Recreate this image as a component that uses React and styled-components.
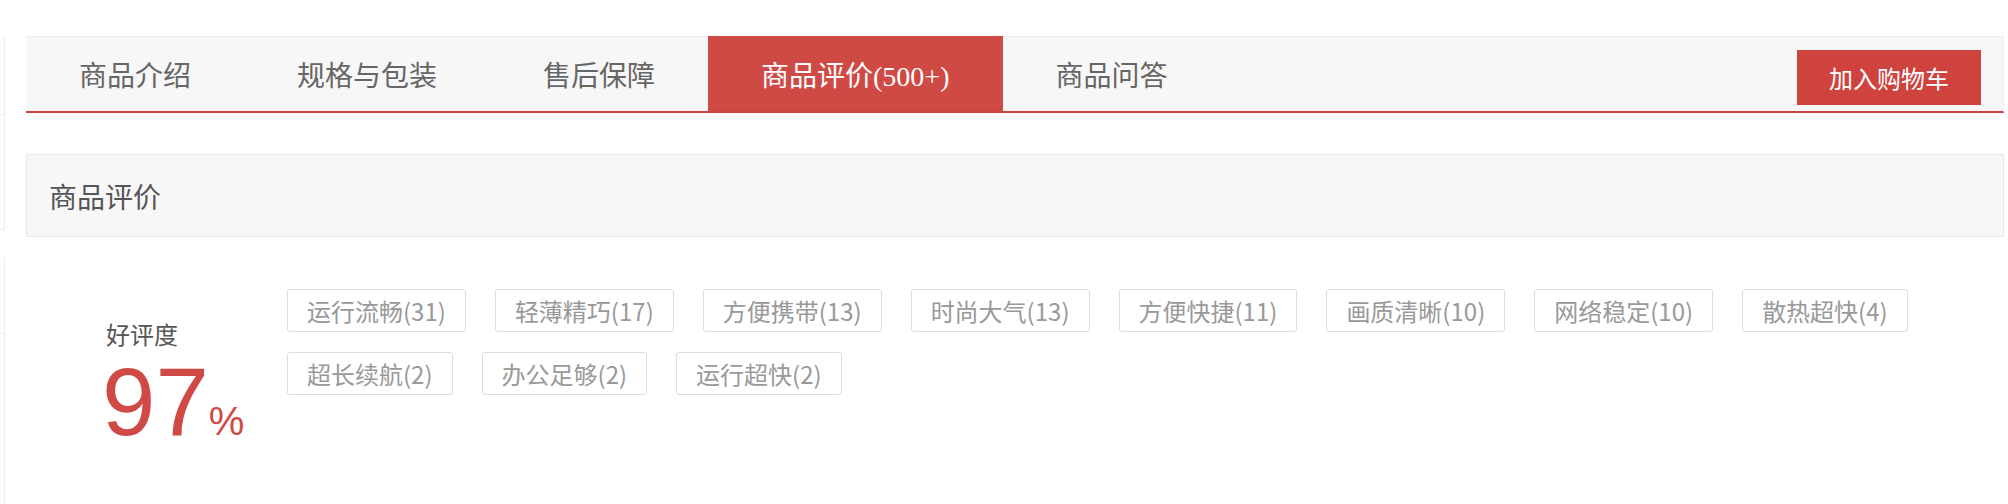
import React from 'react';
import styled, { createGlobalStyle } from 'styled-components';

const GlobalStyle = createGlobalStyle`
  html, body {
    margin: 0;
    padding: 0;
    background: #fff;
  }
  * {
    box-sizing: border-box;
  }
`;

const RED = '#d04a45';
const SERIF = '"Liberation Serif", "Noto Sans CJK SC", serif';
const SANS = '"Noto Sans CJK SC", "Noto Sans", sans-serif';

const Page = styled.div`
  display: flex;
  width: 2008px;
  height: 504px;
  overflow: hidden;
`;

const Sidebar = styled.div`
  width: 5px;
  flex-shrink: 0;
  display: flex;
  flex-direction: column;
`;

const SideCell = styled.div`
  height: ${({ $h }) => $h};
  margin-top: ${({ $top }) => $top || '0'};
  border-right: 1px solid #ececec;
  border-bottom: ${({ $last }) => ($last ? 'none' : '1px solid #ececec')};
  flex-shrink: 0;
`;

const Main = styled.div`
  flex: 1;
  margin-left: 21px;
  margin-right: 4px;
  padding-top: 36px;
`;

const TabBar = styled.div`
  display: flex;
  align-items: stretch;
  height: 77px;
  background: #f7f7f7;
  border-top: 1px solid #eeeeee;
  border-right: 1px solid #eeeeee;
  border-bottom: 2px solid #c9433f;
`;

const Tab = styled.div`
  display: flex;
  align-items: center;
  padding: 0 53px;
  margin-top: -1px;
  font-family: ${SERIF};
  font-size: 28px;
  color: ${({ $active }) => ($active ? '#fff' : '#666')};
  background: ${({ $active }) => ($active ? RED : 'transparent')};
  cursor: pointer;
`;

const CartButton = styled.button`
  align-self: flex-start;
  margin-left: auto;
  margin-right: 22px;
  margin-top: 13px;
  width: 184px;
  height: 55px;
  border: none;
  background: #cf433f;
  color: #fff;
  font-family: ${SANS};
  font-size: 24px;
  cursor: pointer;
`;

const SectionHeader = styled.div`
  margin-top: 41px;
  height: 83px;
  display: flex;
  align-items: center;
  padding-left: 22px;
  background: #f7f7f7;
  border: 1px solid #e8e8e8;
  font-family: ${SERIF};
  font-size: 28px;
  color: #555;
`;

const Review = styled.div`
  display: flex;
  padding-top: 52px;
`;

const Rate = styled.div`
  width: 261px;
  flex-shrink: 0;
  padding-left: 80px;
  padding-top: 29px;
`;

const RateLabel = styled.div`
  font-family: ${SANS};
  font-size: 24px;
  line-height: 31px;
  margin-bottom: 5px;
  color: #555;
`;

const RateValue = styled.div`
  margin-left: -4px;
  font-family: "Liberation Sans", Arial, sans-serif;
  font-size: 96px;
  line-height: 1;
  color: ${RED};
  white-space: nowrap;
`;

const Percent = styled.span`
  font-size: 40px;
`;

const Tags = styled.div`
  flex: 1;
  display: flex;
  flex-wrap: wrap;
  align-content: flex-start;
  gap: 20px 29px;
`;

const TagItem = styled.span`
  height: 43px;
  padding: 0 19px;
  border: 1px solid #dddddd;
  border-radius: 3px;
  font-family: ${SANS};
  font-size: 24px;
  line-height: 41px;
  color: #999;
  white-space: nowrap;
  cursor: pointer;
`;

const tabs = ['商品介绍', '规格与包装', '售后保障', '商品评价(500+)', '商品问答'];

const tags = [
  '运行流畅(31)',
  '轻薄精巧(17)',
  '方便携带(13)',
  '时尚大气(13)',
  '方便快捷(11)',
  '画质清晰(10)',
  '网络稳定(10)',
  '散热超快(4)',
  '超长续航(2)',
  '办公足够(2)',
  '运行超快(2)',
];

export default function App() {
  return (
    <>
      <GlobalStyle />
      <Page>
        <Sidebar>
          <SideCell $top="37px" $h="78px" />
          <SideCell $h="115px" />
          <SideCell $top="28px" $h="76px" />
          <SideCell $h="200px" $last />
        </Sidebar>
        <Main>
          <TabBar>
            {tabs.map((t, i) => (
              <Tab key={t} $active={i === 3}>{t}</Tab>
            ))}
            <CartButton>加入购物车</CartButton>
          </TabBar>
          <SectionHeader>商品评价</SectionHeader>
          <Review>
            <Rate>
              <RateLabel>好评度</RateLabel>
              <RateValue>
                97<Percent>%</Percent>
              </RateValue>
            </Rate>
            <Tags>
              {tags.map((t) => (
                <TagItem key={t}>{t}</TagItem>
              ))}
            </Tags>
          </Review>
        </Main>
      </Page>
    </>
  );
}
